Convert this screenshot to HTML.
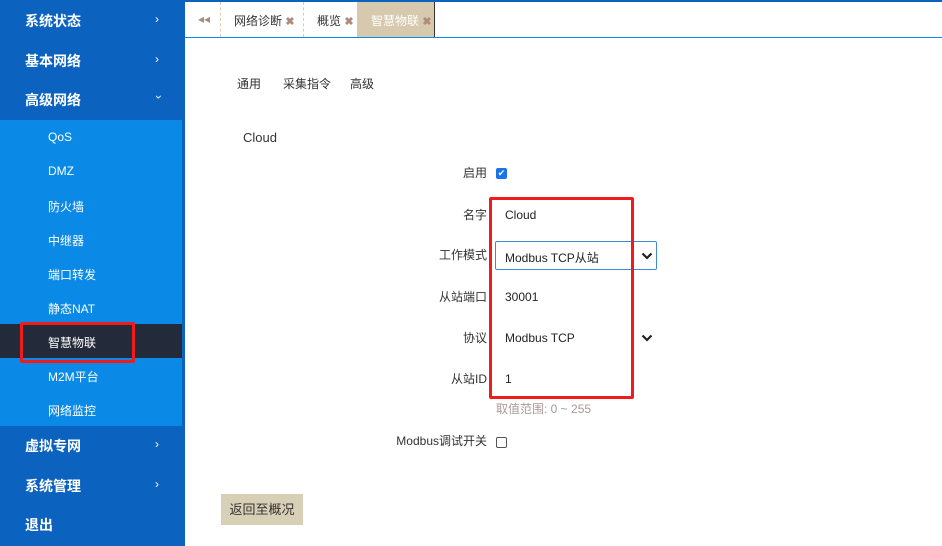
<!DOCTYPE html>
<html><head><meta charset="utf-8"><style>
*{margin:0;padding:0;box-sizing:border-box}
body{width:942px;height:546px;overflow:hidden;background:#fff;font-family:"Liberation Sans","Noto Sans CJK SC",sans-serif;position:relative}
.sb{position:absolute;left:0;top:0;width:185px;height:546px;background:#0c63bf}
.m{position:absolute;left:25px;color:#fff;font-weight:bold;font-size:14px}
.ar{position:absolute;left:155px;color:#fff;font-size:12px}
.sub{position:absolute;left:0;top:120px;width:182px;height:306px;background:#0a8ae6}
.si{position:absolute;left:48px;color:#fff;font-size:12px}
.act{position:absolute;left:0;top:324px;width:182px;height:34px;background:#232b3a}
.red{position:absolute;border:3px solid #f01c1c;border-radius:2px}
.top{position:absolute;left:185px;top:0;width:757px;height:2px;background:#0c63bf}
.tabs{position:absolute;left:185px;top:2px;width:757px;height:36px;border-bottom:1px solid #0a8ae6}
.t{position:absolute;top:10px;font-size:12px;color:#333}
.t b{color:#b08a7a;font-size:11px}
.lbl{position:absolute;font-size:12px;color:#333;text-align:right;width:200px;left:287px}
.v{position:absolute;left:505px;font-size:12px;color:#222}
.cb{position:absolute;left:496px;width:11px;height:11px;border:1px solid #555;border-radius:2px;background:#fff}
.chev{position:absolute;left:641px;width:12px;height:8px}
</style></head><body>
<div class="sb"></div>
<div class="m" style="top:11px">系统状态</div><div class="ar" style="top:12px">›</div>
<div class="m" style="top:51px">基本网络</div><div class="ar" style="top:52px">›</div>
<div class="m" style="top:90px">高级网络</div><div class="ar" style="top:90px;transform:rotate(90deg);left:157px">›</div>
<div class="sub"></div>
<div class="act"></div>
<div class="si" style="top:130px">QoS</div>
<div class="si" style="top:164px">DMZ</div>
<div class="si" style="top:198px">防火墙</div>
<div class="si" style="top:232px">中继器</div>
<div class="si" style="top:266px">端口转发</div>
<div class="si" style="top:300px">静态NAT</div>
<div class="si" style="top:334px">智慧物联</div>
<div class="si" style="top:368px">M2M平台</div>
<div class="si" style="top:402px">网络监控</div>
<div class="red" style="left:20px;top:322px;width:115px;height:41px"></div>
<div class="m" style="top:436px">虚拟专网</div><div class="ar" style="top:437px">›</div>
<div class="m" style="top:476px">系统管理</div><div class="ar" style="top:477px">›</div>
<div class="m" style="top:515px">退出</div>
<div class="top"></div>
<div class="tabs">
<div class="t" style="left:13px;color:#b08a7a">◂◂</div>
<div style="position:absolute;left:35px;top:0;width:1px;height:35px;border-left:1px dashed #d8cbb0"></div>
<div class="t" style="left:49px">网络诊断 <b>✖</b></div>
<div style="position:absolute;left:118px;top:0;width:1px;height:35px;border-left:1px dashed #d8cbb0"></div>
<div class="t" style="left:132px">概览 <b>✖</b></div>
<div style="position:absolute;left:172px;top:0;width:78px;height:35px;background:#d6c9ad;border-right:1px solid #333"></div>
<div class="t" style="left:186px;color:#fff">智慧物联 <b>✖</b></div>
</div>
<div class="t" style="left:237px;top:75px">通用</div>
<div class="t" style="left:283px;top:75px">采集指令</div>
<div class="t" style="left:350px;top:75px">高级</div>
<div class="t" style="left:243px;top:130px;font-size:13px">Cloud</div>
<div class="lbl" style="top:164px">启用</div>
<div class="cb" style="top:168px;background:#1a73e8;border-color:#1a73e8;color:#fff;font-size:9px;line-height:9px;text-align:center">✔</div>
<div class="lbl" style="top:206px">名字</div><div class="v" style="top:208px">Cloud</div>
<div class="lbl" style="top:246px">工作模式</div>
<div style="position:absolute;left:495px;top:241px;width:162px;height:29px;border:1px solid #3b8bd9;border-radius:2px"></div>
<div class="v" style="top:249px">Modbus TCP从站</div>
<svg class="chev" style="top:252px" viewBox="0 0 12 8"><path d="M1.5 1.5L6 6L10.5 1.5" stroke="#222" stroke-width="2.2" fill="none"/></svg>
<div class="lbl" style="top:288px">从站端口</div><div class="v" style="top:290px">30001</div>
<div class="lbl" style="top:329px">协议</div><div class="v" style="top:331px">Modbus TCP</div>
<svg class="chev" style="top:334px" viewBox="0 0 12 8"><path d="M1.5 1.5L6 6L10.5 1.5" stroke="#222" stroke-width="2.2" fill="none"/></svg>
<div class="lbl" style="top:370px">从站ID</div><div class="v" style="top:372px">1</div>
<div class="v" style="top:400px;left:496px;color:#a99;">取值范围: 0 ~ 255</div>
<div class="lbl" style="top:432px">Modbus调试开关</div>
<div class="cb" style="top:437px"></div>
<div class="red" style="left:489px;top:197px;width:145px;height:202px"></div>
<div style="position:absolute;left:221px;top:494px;width:82px;height:31px;background:#d8cfb7;font-size:13px;color:#333;text-align:center;line-height:31px">返回至概况</div>
</body></html>
